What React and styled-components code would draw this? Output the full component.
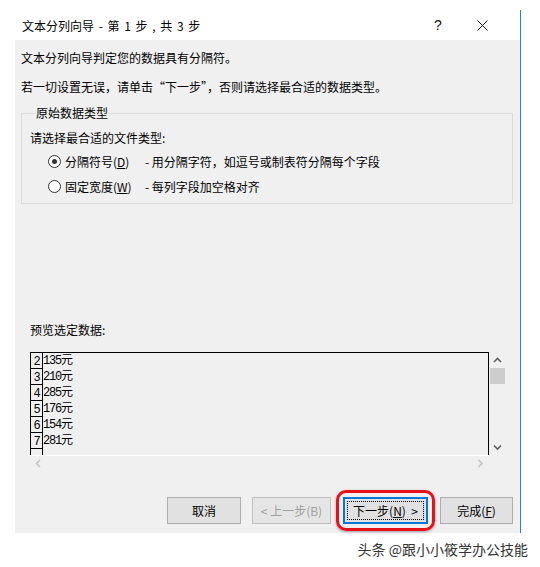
import React from "react";
import styled, { createGlobalStyle } from "styled-components";

const GlobalStyle = createGlobalStyle`
  html, body {
    margin: 0;
    padding: 0;
    background: #ffffff;
  }
  body {
    font-family: "Noto Sans CJK SC", "Noto Sans", sans-serif;
    font-size: 12px;
    color: #000;
  }
`;

const rows = [
  { n: 2, v: "135元" },
  { n: 3, v: "210元" },
  { n: 4, v: "285元" },
  { n: 5, v: "176元" },
  { n: 6, v: "154元" },
  { n: 7, v: "281元" },
  { n: "", v: "" },
];

const Chevron = ({ dir, color }) => {
  const d = {
    up: "M1 5 L4.5 1.5 L8 5",
    down: "M1 1.5 L4.5 5 L8 1.5",
    left: "M5 1 L1.5 4.5 L5 8",
    right: "M1.5 1 L5 4.5 L1.5 8",
  }[dir];
  const vertical = dir === "up" || dir === "down";
  return (
    <svg
      width={vertical ? 9 : 7}
      height={vertical ? 7 : 9}
      viewBox={vertical ? "0 0 9 7" : "0 0 7 9"}
    >
      <path d={d} fill="none" stroke={color} strokeWidth="1.6" />
    </svg>
  );
};

const App = () => {
  return (
    <Page>
      <GlobalStyle />
      <Window>
        <TitleBar>
          <Title>文本分列向导 - 第 1 步 , 共 3 步</Title>
          <TitleActions>
            <TitleButton>
              <Help>?</Help>
            </TitleButton>
            <TitleButton>
              <svg width="11" height="11" viewBox="0 0 11 11">
                <path d="M0.5 0.5 L10.5 10.5 M10.5 0.5 L0.5 10.5" stroke="#111" strokeWidth="1" />
              </svg>
            </TitleButton>
          </TitleActions>
        </TitleBar>
        <Body>
          <Line $top={10}>文本分列向导判定您的数据具有分隔符。</Line>
          <Line $top={13}>若一切设置无误，请单击“下一步”，否则请选择最合适的数据类型。</Line>
          <Group>
            <Legend>原始数据类型</Legend>
            <GroupHint>请选择最合适的文件类型:</GroupHint>
            <RadioRow $top={7}>
              <Radio $checked />
              <RadioLabel>
                分隔符号(<u>D</u>)
              </RadioLabel>
              <RadioDesc>- 用分隔字符，如逗号或制表符分隔每个字段</RadioDesc>
            </RadioRow>
            <RadioRow $top={9}>
              <Radio />
              <RadioLabel>
                固定宽度(<u>W</u>)
              </RadioLabel>
              <RadioDesc>- 每列字段加空格对齐</RadioDesc>
            </RadioRow>
          </Group>
          <PreviewLabel>预览选定数据:</PreviewLabel>
          <Preview>
            <PreviewTop>
              <Grid>
                {rows.map((r, i) => (
                  <GridRow key={i}>
                    <NumCell>{r.n}</NumCell>
                    <ValueCell>{r.v}</ValueCell>
                  </GridRow>
                ))}
              </Grid>
              <VScroll>
                <ScrollArrow>
                  <Chevron dir="up" color="#606060" />
                </ScrollArrow>
                <Thumb />
                <VSpacer />
                <ScrollArrow>
                  <Chevron dir="down" color="#606060" />
                </ScrollArrow>
              </VScroll>
            </PreviewTop>
            <HScroll>
              <Chevron dir="left" color="#c4c4c4" />
              <Chevron dir="right" color="#c4c4c4" />
            </HScroll>
          </Preview>
          <Buttons>
            <Button $gapAfter={6}>取消</Button>
            <Button $width={79} disabled>
              &lt;&nbsp;上一步(B)
            </Button>
            <Highlight>
              <Button $width={85} $focused>
                <FocusRing>
                  下一步(<u>N</u>)&nbsp;&nbsp;&gt;
                </FocusRing>
              </Button>
            </Highlight>
            <Button $width={73}>
              完成(<u>F</u>)
            </Button>
          </Buttons>
        </Body>
      </Window>
      <Watermark>头条 @跟小小筱学办公技能</Watermark>
    </Page>
  );
};

const Page = styled.div`
  width: 540px;
  height: 567px;
  background: #fff;
  overflow: hidden;
`;

const Window = styled.div`
  margin-top: 10px;
  width: 520px;
  border-right: 1px solid #1a82e2;
  display: flex;
  flex-direction: column;
`;

const TitleBar = styled.div`
  height: 30px;
  display: flex;
  align-items: center;
  justify-content: space-between;
  padding-left: 22px;
  background: #fff;
`;

const Title = styled.div`
  font-size: 12px;
  color: #000;
  word-spacing: 2px;
`;

const TitleActions = styled.div`
  display: flex;
  gap: 16px;
  padding-right: 24px;
`;

const TitleButton = styled.div`
  width: 28px;
  height: 30px;
  display: flex;
  align-items: center;
  justify-content: center;
`;

const Help = styled.span`
  font-family: "Liberation Sans", sans-serif;
  font-size: 14px;
  color: #111;
`;

const Body = styled.div`
  margin-left: 15px;
  height: 493px;
  background: #f0f0f0;
  padding: 0 7px 0 6px;
  display: flex;
  flex-direction: column;
  box-sizing: border-box;
`;

const Line = styled.div`
  margin-top: ${(p) => p.$top}px;
  line-height: 16px;
  font-size: 12px;
`;

const Group = styled.fieldset`
  margin: 10px 0 0;
  padding: 9px 0 9px 8px;
  border: 1px solid #dcdcdc;
  min-width: 0;
  display: flex;
  flex-direction: column;
`;

const Legend = styled.legend`
  padding: 0 1px;
  margin-left: 5px;
  line-height: 16px;
  font-size: 12px;
`;

const GroupHint = styled.div`
  line-height: 16px;
`;

const RadioRow = styled.div`
  margin-top: ${(p) => p.$top}px;
  display: flex;
  align-items: center;
  height: 16px;
  padding-left: 18px;
`;

const Radio = styled.span`
  width: 11px;
  height: 11px;
  border: 1px solid #333;
  border-radius: 50%;
  background: #fff;
  display: flex;
  align-items: center;
  justify-content: center;
  &::after {
    content: "";
    width: 5px;
    height: 5px;
    border-radius: 50%;
    background: ${(p) => (p.$checked ? "#333" : "transparent")};
  }
`;

const RadioLabel = styled.span`
  width: 80px;
  margin-left: 4px;
`;

const RadioDesc = styled.span``;

const PreviewLabel = styled.div`
  margin-top: 118px;
  margin-left: 9px;
  line-height: 16px;
`;

const Preview = styled.div`
  margin-top: 14px;
  margin-left: 9px;
  width: 475px;
  display: flex;
  flex-direction: column;
`;

const PreviewTop = styled.div`
  display: flex;
`;

const Grid = styled.div`
  flex: 1;
  height: 102px;
  border: 1px solid #000;
  border-bottom: none;
  overflow: hidden;
`;

const GridRow = styled.div`
  display: flex;
  height: 16px;
`;

const NumCell = styled.div`
  width: 11px;
  height: 15px;
  border-right: 1px solid #000;
  border-bottom: 1px solid #000;
  font-family: "Liberation Mono", monospace;
  font-size: 12px;
  line-height: 19px;
  letter-spacing: -1px;
  text-align: center;
  overflow: hidden;
`;

const ValueCell = styled.div`
  font-family: "Liberation Mono", "Noto Sans CJK SC", monospace;
  font-size: 12px;
  line-height: 17px;
  letter-spacing: -1.2px;
`;

const VScroll = styled.div`
  width: 16px;
  display: flex;
  flex-direction: column;
  align-items: center;
`;

const ScrollArrow = styled.div`
  height: 16px;
  display: flex;
  align-items: center;
  justify-content: center;
`;

const Thumb = styled.div`
  width: 15px;
  height: 16px;
  background: #cdcdcd;
`;

const VSpacer = styled.div`
  flex: 1;
`;

const HScroll = styled.div`
  width: 459px;
  height: 15px;
  border-top: 1px solid #fff;
  display: flex;
  align-items: center;
  justify-content: space-between;
  padding: 0 5px;
  box-sizing: border-box;
`;

const Buttons = styled.div`
  margin-top: auto;
  margin-bottom: 2px;
  display: flex;
  align-items: center;
  justify-content: flex-end;
  gap: 5px;
`;

const Button = styled.button`
  width: ${(p) => p.$width || 74}px;
  height: 27px;
  margin-right: ${(p) => p.$gapAfter || 0}px;
  padding: 2px;
  box-sizing: border-box;
  font-family: "Noto Sans CJK SC", sans-serif;
  font-size: 12px;
  color: #000;
  background: #e1e1e1;
  border: ${(p) => (p.$focused ? "2px solid #0078d7" : "1px solid #adadad")};
  display: flex;
  align-items: center;
  justify-content: center;
  &:disabled {
    color: #a0a0a0;
    border-color: #bfbfbf;
    background: #e5e5e5;
  }
  u {
    text-decoration: underline;
  }
`;

const FocusRing = styled.span`
  flex: 1;
  align-self: stretch;
  border: 1px dotted #000;
  display: flex;
  align-items: center;
  justify-content: center;
`;

const Highlight = styled.div`
  padding: 4px;
  border: 3px solid #e8101a;
  border-radius: 10px;
  box-shadow: 0 1px 3px rgba(0, 0, 0, 0.35);
`;

const Watermark = styled.div`
  padding-right: 12px;
  margin-top: 7px;
  text-align: right;
  font-size: 14px;
  line-height: 18px;
  color: #333;
  text-shadow: 0 0 2px #fff;
`;

export default App;
